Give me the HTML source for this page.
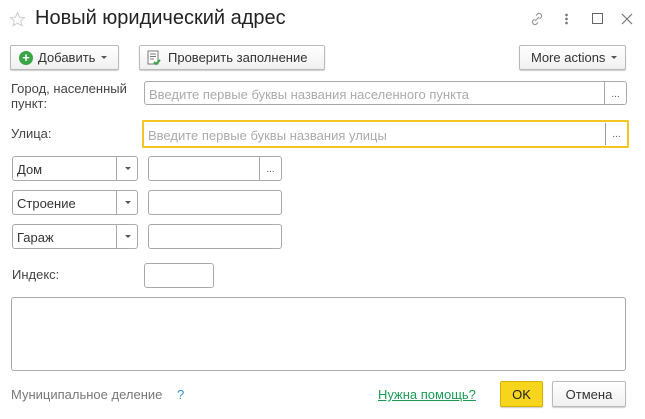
<!DOCTYPE html>
<html><head><meta charset="utf-8"><style>
*{box-sizing:border-box}
body{margin:0;width:645px;height:419px;background:#fff;font-family:"Liberation Sans",Arial,sans-serif;font-size:13px;color:#333;position:relative;overflow:hidden}
.a{position:absolute}
.btn{position:absolute;border:1px solid #b9b9b9;border-radius:2px;background:linear-gradient(#fff,#f0f0f0);box-shadow:0 1px 1px rgba(0,0,0,.2);font-size:13px;color:#333;display:flex;align-items:center}
.inp{position:absolute;border:1px solid #aaa;border-radius:3px;background:#fff}
.ph{position:absolute;left:4px;top:5px;color:#aaa;font-size:13px;white-space:nowrap}
.dots{position:absolute;right:0;top:0;bottom:0;width:22px;border-left:1px solid #aaa;font-size:10px;color:#555;text-align:center;padding-top:7px}
.caret{position:absolute;right:0;top:0;bottom:0;width:21px;border-left:1px solid #aaa}
.caret:after{content:"";position:absolute;left:8px;top:10px;border:3px solid transparent;border-top:3px solid #555}
.lab{position:absolute;font-size:13px;color:#444}
</style></head><body>
<svg class="a" style="left:9px;top:11px" width="17" height="17" viewBox="0 0 17 17"><path d="M8.5 1.5l2 4.6 5 .4-3.8 3.3 1.2 4.9-4.4-2.6-4.4 2.6 1.2-4.9L1.5 6.5l5-.4z" fill="none" stroke="#ccc" stroke-width="1"/></svg>
<div class="a" style="left:35px;top:7px;font-size:20px;color:#222">Новый юридический адрес</div>
<svg class="a" style="left:529px;top:11px" width="16" height="16" viewBox="0 0 16 16"><path d="M6 10l4-4M7 4.5l1.5-1.5a2.5 2.5 0 013.5 3.5L10.5 8M9 11.5L7.5 13A2.5 2.5 0 014 9.5L5.5 8" fill="none" stroke="#999" stroke-width="1.2"/></svg>
<div class="a" style="left:565px;top:13px;width:3px;height:12px;background:radial-gradient(circle,#777 1.2px,transparent 1.5px) 0 0/3px 4px"></div>
<div class="a" style="left:592px;top:13px;width:11px;height:11px;border:1.3px solid #666"></div>
<svg class="a" style="left:621px;top:13px" width="12" height="12" viewBox="0 0 12 12"><path d="M1 1l10 10M11 1L1 11" stroke="#777" stroke-width="1.2"/></svg>

<div class="btn" style="left:10px;top:45px;width:109px;height:25px"><span style="margin-left:8px;width:14px;height:14px;border-radius:50%;background:#3aa544;color:#fff;font-size:13px;line-height:14px;text-align:center;font-weight:bold">+</span><span style="margin-left:5px">Добавить</span><span style="margin-left:6px;border:3px solid transparent;border-top-color:#555;margin-top:3px"></span></div>
<div class="btn" style="left:139px;top:45px;width:186px;height:25px"><svg style="margin-left:7px" width="14" height="16" viewBox="0 0 14 16"><rect x="1" y="1" width="10" height="13" fill="#fff" stroke="#777"/><path d="M3 4h6M3 6.5h6M3 9h4" stroke="#777"/><path d="M7 12l2 2 4-4" stroke="#3aa544" stroke-width="2" fill="none"/></svg><span style="margin-left:7px">Проверить заполнение</span></div>
<div class="btn" style="left:519px;top:45px;width:107px;height:25px"><span style="margin-left:11px">More actions</span><span style="margin-left:6px;border:3px solid transparent;border-top-color:#555;margin-top:3px"></span></div>

<div class="lab" style="left:11px;top:81px;line-height:15px">Город, населенный<br>пункт:</div>
<div class="inp" style="left:144px;top:81px;width:483px;height:24px"><span class="ph">Введите первые буквы названия населенного пункта</span><span class="dots">...</span></div>
<div class="lab" style="left:11px;top:126px">Улица:</div>
<div class="inp" style="left:142px;top:120px;width:487px;height:28px;border:2px solid #f3c623;border-radius:1px"><span class="ph" style="top:6px">Введите первые буквы названия улицы</span><span class="dots" style="border-left-color:#999;top:1px;bottom:1px;padding-top:6px">...</span></div>

<div class="inp" style="left:12px;top:156px;width:126px;height:25px"><span class="ph" style="color:#333">Дом</span><span class="caret"></span></div>
<div class="inp" style="left:148px;top:156px;width:134px;height:25px"><span class="dots">...</span></div>
<div class="inp" style="left:12px;top:190px;width:126px;height:25px"><span class="ph" style="color:#333">Строение</span><span class="caret"></span></div>
<div class="inp" style="left:148px;top:190px;width:134px;height:25px"></div>
<div class="inp" style="left:12px;top:224px;width:126px;height:25px"><span class="ph" style="color:#333">Гараж</span><span class="caret"></span></div>
<div class="inp" style="left:148px;top:224px;width:134px;height:25px"></div>
<div class="lab" style="left:12px;top:267px">Индекс:</div>
<div class="inp" style="left:144px;top:263px;width:70px;height:25px"></div>
<div class="inp" style="left:11px;top:297px;width:615px;height:74px"></div>

<div class="lab" style="left:11px;top:387px;color:#777">Муниципальное деление</div>
<div class="lab" style="left:177px;top:387px;color:#3a8fd0">?</div>
<div class="lab" style="left:378px;top:387px;color:#1a9a55;text-decoration:underline">Нужна помощь?</div>
<div class="btn" style="left:500px;top:381px;width:43px;height:26px;background:#f7d51c;border-color:#d6b200;justify-content:center;color:#222">OK</div>
<div class="btn" style="left:552px;top:381px;width:74px;height:26px;justify-content:center">Отмена</div>
</body></html>
